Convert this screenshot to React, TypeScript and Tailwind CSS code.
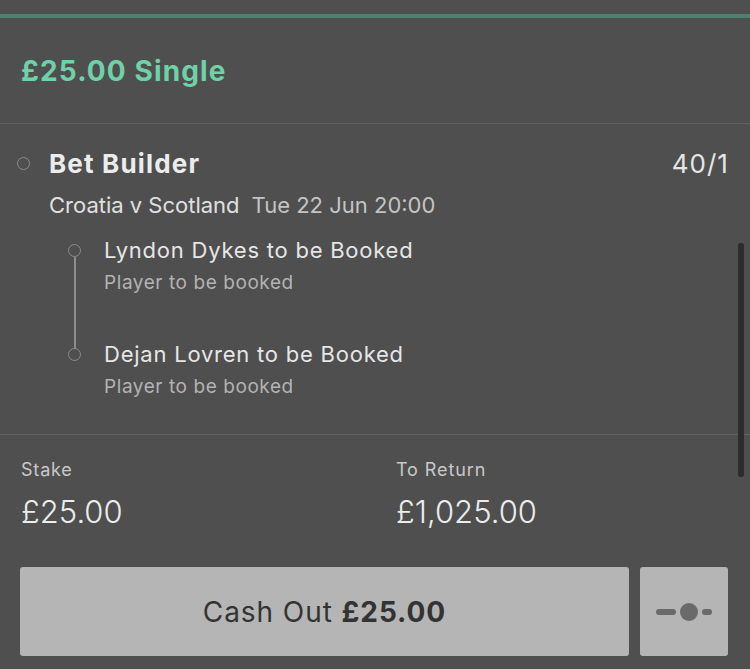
import React from "react";

const font = { fontFamily: "Inter, 'Noto Sans', sans-serif" };

function Leg({ title, sub, last }: { title: string; sub: string; last?: boolean }) {
  return (
    <div className="flex h-[104px]">
      <div className="relative w-[55px] flex-none">
        <div className="absolute left-[19px] top-[9px] h-[13px] w-[13px] rounded-full border-[1.5px] border-[#8d8d8d]" />
        {!last && <div className="absolute left-[25px] top-[22px] h-[92px] w-[1.5px] bg-[#8d8d8d]" />}
      </div>
      <div className="flex flex-col">
        <div className="text-[22px] leading-[30px] tracking-[0.035em] text-[#e6e6e6]">{title}</div>
        <div className="mt-[6px] text-[19px] leading-[24px] tracking-[0.03em] text-[#b3b3b3]">{sub}</div>
      </div>
    </div>
  );
}

export default function App() {
  return (
    <div className="relative h-[669px] w-[750px] overflow-hidden bg-[#4f4f4f]" style={font}>
      <div className="h-[14px]" />
      <div className="h-[4px] bg-[#4b7f6e]" />

      {/* header */}
      <div className="flex h-[106px] items-center border-b border-[#626262] px-[21px]">
        <h1 className="text-[28px] font-bold tracking-[0.04em] text-[#6fd1a8]">£25.00 Single</h1>
      </div>

      {/* selection */}
      <div className="h-[311px] border-b border-[#626262] pt-[24px]">
        <div className="flex items-start pl-[17px] pr-[21px]">
          <div className="mt-[9px] h-[13px] w-[13px] flex-none rounded-full border-[1.5px] border-[#8d8d8d]" />
          <div className="ml-[19px] flex-1">
            <div className="flex items-center justify-between">
              <span className="text-[26px] font-bold leading-[32px] tracking-[0.045em] text-[#ececec]">Bet Builder</span>
              <span className="text-[26px] leading-[32px] tracking-[0.04em] text-[#e6e6e6]">40/1</span>
            </div>
            <div className="mt-[11px] text-[22px] leading-[28px]">
              <span className="text-[#e0e0e0]">Croatia v Scotland</span>
              <span className="ml-[12px] text-[#c4c4c4]">Tue 22 Jun 20:00</span>
            </div>
          </div>
        </div>
        <div className="mt-[16px] pl-[49px]">
          <Leg title="Lyndon Dykes to be Booked" sub="Player to be booked" />
          <Leg title="Dejan Lovren to be Booked" sub="Player to be booked" last />
        </div>
      </div>

      {/* stake / return */}
      <div className="grid grid-cols-[375px_1fr] px-[21px] pt-[24px]">
        <div>
          <div className="text-[18px] leading-[22px] tracking-[0.045em] text-[#c8c8c8]">Stake</div>
          <div className="mt-[12px] text-[31px] font-light leading-[38px] text-[#ececec]">£25.00</div>
        </div>
        <div>
          <div className="text-[18px] leading-[22px] tracking-[0.05em] text-[#c8c8c8]">To Return</div>
          <div className="mt-[12px] text-[31px] font-light leading-[38px] text-[#ececec]">£1,025.00</div>
        </div>
      </div>

      {/* actions */}
      <div className="mt-[36px] flex gap-[11px] pl-[20px] pr-[22px]">
        <button className="flex h-[89px] flex-1 items-center justify-center rounded-[3px] bg-[#b5b5b5] text-[28px] tracking-[0.033em] text-[#333]">
          Cash Out&nbsp;<b className="font-bold">£25.00</b>
        </button>
        <button className="flex h-[89px] w-[88px] items-center justify-center rounded-[3px] bg-[#b5b5b5]">
          <svg width="56" height="20" viewBox="0 0 56 20">
            <rect x="0" y="7" width="20" height="6" rx="3" fill="#6a6a6a" />
            <circle cx="33" cy="10" r="9" fill="#6a6a6a" />
            <rect x="46" y="7" width="10" height="6" rx="3" fill="#6a6a6a" />
          </svg>
        </button>
      </div>

      {/* scrollbar */}
      <div className="absolute left-[738px] top-[243px] h-[234px] w-[6px] rounded-full bg-[#2c2c2c]" />
    </div>
  );
}
